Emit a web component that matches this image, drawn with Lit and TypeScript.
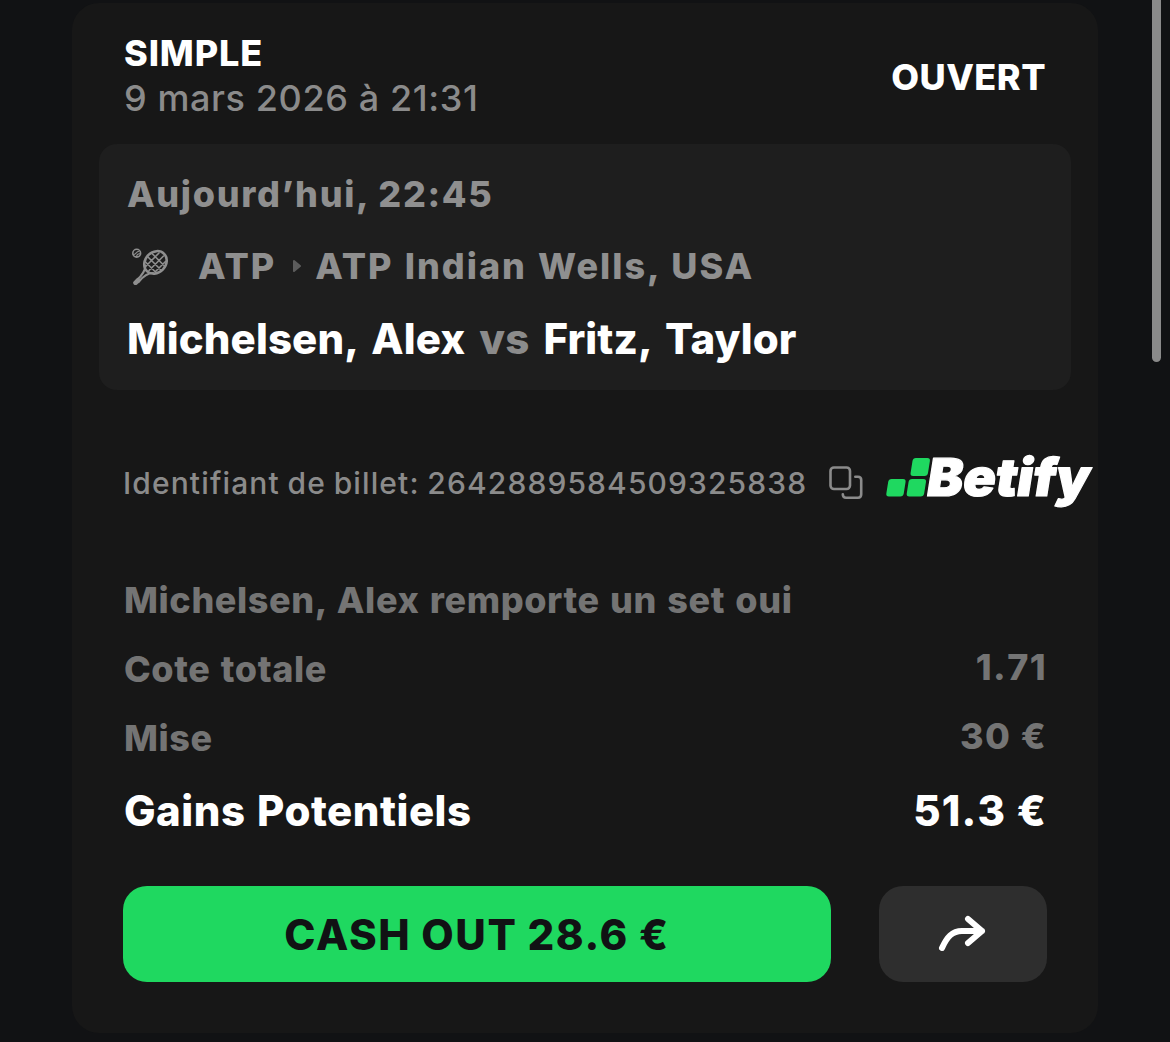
import { LitElement, html, css, svg } from 'lit';
import { customElement, property } from 'lit/decorators.js';

@customElement('betify-logo')
export class BetifyLogo extends LitElement {
  static styles = css`
    :host {
      display: block;
      width: 208px;
      height: 58px;
    }
    svg {
      display: block;
      overflow: visible;
    }
    .word {
      font-family: Inter, 'Open Sans', sans-serif;
      font-size: 52px;
      font-weight: 900;
      fill: #fff;
      stroke: #fff;
      stroke-width: 1.2px;
      stroke-linejoin: round;
    }
    .tile {
      fill: #1fd860;
    }
  `;

  render() {
    return html`
      <svg width="208" height="58" viewBox="0 0 208 58" role="img" aria-label="Betify">
        <g class="tile" transform="skewX(-9)">
          <rect x="26.6" y="4" width="17.4" height="18" rx="3" />
          <rect x="5.6" y="25" width="17.4" height="17.5" rx="3" />
          <rect x="26" y="25" width="17.4" height="17.5" rx="3" />
        </g>
        <text
          class="word"
          transform="translate(38 42.3) skewX(-9)"
          textLength="163"
          lengthAdjust="spacingAndGlyphs"
        >Betify</text>
      </svg>
    `;
  }
}

@customElement('ticket-row')
export class TicketRow extends LitElement {
  @property() label = '';
  @property() value = '';
  @property({ type: Boolean, reflect: true }) strong = false;

  static styles = css`
    :host {
      display: flex;
      justify-content: space-between;
      height: 69px;
      line-height: 69px;
      font-size: 36px;
      font-weight: 800;
      letter-spacing: 0.6px;
      word-spacing: 1.8px;
      color: #747474;
    }
    :host([strong]) {
      height: 76px;
      line-height: 76px;
      font-size: 42px;
      letter-spacing: 0.5px;
      color: #fff;
    }
    .value {
      margin: -2px -1px 0 0;
      letter-spacing: 1.4px;
      word-spacing: 0;
      font-kerning: none;
    }
    :host([strong]) .value {
      margin-top: 0;
      letter-spacing: 1.2px;
    }
  `;

  render() {
    return html`
      <span class="label">${this.label}</span>
      <span class="value">${this.value}</span>
    `;
  }
}

const racketIcon = svg`
  <g fill="none" stroke="#8f8f8f" stroke-linecap="round">
    <circle cx="4.7" cy="5.2" r="3.9" stroke-width="1.6" />
    <path d="M1.5 6.5C4 6.5 4 3.5 7 3.2M4.5 8.5C5 6 6.5 5.5 8.2 5.8" stroke-width="1.1" />
    <ellipse cx="23.5" cy="14.4" rx="12.2" ry="10.3" transform="rotate(-45 23.5 14.4)" stroke-width="2.5" />
    <path d="M13.500 17.500C13.300 23 10 27.500 4.500 32.500M21 25C15 25 11 28.500 6.500 34" stroke-width="2.200" />
    <path d="M3.500 34.800L6 32.300" stroke-width="4.600" />
    <path
      d="M20 5.500L32.500 18M16 9L29 22M13.500 14L23.500 24M27 5L13.500 18.500M31.500 8L17 22.500M34 13L23 24"
      stroke-width="1.600"
    />
  </g>
`;

const copyIcon = svg`
  <g fill="none" stroke="#8b8b8b" stroke-width="2.6" stroke-linecap="round" stroke-linejoin="round">
    <rect x="1.500" y="1.500" width="19.500" height="21.500" rx="3.500" />
    <path d="M26.300 10.800H29C31 10.800 32.200 12 32.200 14V28.300C32.200 30.300 31 31.800 29 31.800H17C15 31.800 13.800 30.500 13.800 28.300" />
  </g>
`;

@customElement('app-root')
export class AppRoot extends LitElement {
  static styles = css`
    :host {
      display: block;
      position: relative;
      box-sizing: border-box;
      height: 1042px;
      padding: 3px 72px 9px;
      overflow: hidden;
      background: #111214;
      font-family: Inter, 'Liberation Sans', sans-serif;
      color: #fff;
    }
    .scrollbar {
      position: absolute;
      top: -10px;
      right: 9px;
      width: 9px;
      height: 372px;
      border-radius: 5px;
      background: #8a8a8a;
    }
    .card {
      box-sizing: border-box;
      height: 1030px;
      padding: 27px 27px 0;
      border-radius: 27px;
      background: #171717;
    }
    .header {
      display: flex;
      justify-content: space-between;
      align-items: center;
      padding: 0 25px;
      font-size: 36px;
      line-height: 46px;
    }
    .kind {
      font-weight: 800;
      letter-spacing: 0.9px;
    }
    .date {
      margin-top: -1px;
      font-weight: 500;
      letter-spacing: 0.6px;
      font-kerning: none;
      color: #8b8b8b;
    }
    .status {
      padding-top: 3px;
      font-weight: 800;
      letter-spacing: 0.5px;
    }
    .event {
      box-sizing: border-box;
      height: 246px;
      margin-top: 23px;
      padding: 14px 28px;
      border-radius: 18px;
      background: #1e1e1e;
    }
    .when,
    .league {
      height: 72px;
      line-height: 72px;
      font-size: 36px;
      font-weight: 800;
      color: #8f8f8f;
    }
    .when {
      letter-spacing: 1.65px;
    }
    .league {
      display: flex;
      align-items: center;
      letter-spacing: 2px;
      word-spacing: 1.2px;
    }
    .racket {
      margin: 0 29px 0 5px;
    }
    .arrow {
      margin: 0 13px 0 16px;
    }
    .teams {
      height: 74px;
      line-height: 74px;
      font-size: 42px;
      font-weight: 800;
      letter-spacing: 0.1px;
      word-spacing: 4.7px;
    }
    .vs {
      color: #8b8b8b;
    }
    .ticket {
      display: flex;
      align-items: center;
      height: 58px;
      margin: 64px -20px 0 24px;
    }
    .ticket-id {
      flex: none;
      width: 684px;
      font-size: 30px;
      font-weight: 500;
      letter-spacing: 1.12px;
      word-spacing: -1.4px;
      color: #8b8b8b;
      white-space: nowrap;
    }
    .copy {
      flex: none;
      margin-left: 22px;
    }
    .brand {
      flex: none;
      margin-left: 24px;
    }
    .rows {
      margin-top: 54px;
      padding: 0 25px;
    }
    .actions {
      display: flex;
      gap: 48px;
      margin-top: 37px;
      padding: 0 24px;
    }
    .btn {
      display: flex;
      align-items: center;
      justify-content: center;
      height: 96px;
      padding: 0;
      border: none;
      border-radius: 24px;
      font: inherit;
      cursor: pointer;
    }
    .cash-out {
      flex: 1;
      background: #1fd860;
      color: #111214;
      font-size: 42px;
      font-weight: 800;
      letter-spacing: 1.6px;
      word-spacing: -0.8px;
    }
    .share {
      width: 168px;
      background: #2e2e2e;
    }
  `;

  render() {
    return html`
      <div class="card">
        <div class="header">
          <div>
            <div class="kind">SIMPLE</div>
            <div class="date">9 mars 2026 à 21:31</div>
          </div>
          <div class="status">OUVERT</div>
        </div>

        <div class="event">
          <div class="when">Aujourd’hui, 22:45</div>
          <div class="league">
            <svg class="racket" width="37" height="37" viewBox="0 0 37 37">${racketIcon}</svg>
            <span>ATP</span>
            <svg class="arrow" width="10" height="14" viewBox="0 0 10 14">
              <path d="M2 2L8 7L2 12Z" fill="#5c5c5c" stroke="#5c5c5c" stroke-width="2" stroke-linejoin="round" />
            </svg>
            <span>ATP Indian Wells, USA</span>
          </div>
          <div class="teams">Michelsen, Alex <span class="vs">vs</span> Fritz, Taylor</div>
        </div>

        <div class="ticket">
          <span class="ticket-id">Identifiant de billet: 2642889584509325838</span>
          <svg class="copy" width="34" height="34" viewBox="0 0 34 34">${copyIcon}</svg>
          <betify-logo class="brand"></betify-logo>
        </div>

        <div class="rows">
          <ticket-row label="Michelsen, Alex remporte un set oui"></ticket-row>
          <ticket-row label="Cote totale" value="1.71"></ticket-row>
          <ticket-row label="Mise" value="30 €"></ticket-row>
          <ticket-row strong label="Gains Potentiels" value="51.3 €"></ticket-row>
        </div>

        <div class="actions">
          <button class="btn cash-out">CASH OUT 28.6 €</button>
          <button class="btn share" aria-label="Partager">
            <svg width="50" height="38" viewBox="0 0 50 38">
              <path
                d="M4 33C9 22 14 16 24 16H44M30 4L44 16L30 28"
                fill="none"
                stroke="#fff"
                stroke-width="6"
                stroke-linecap="round"
                stroke-linejoin="round"
              />
            </svg>
          </button>
        </div>
      </div>
      <div class="scrollbar"></div>
    `;
  }
}
